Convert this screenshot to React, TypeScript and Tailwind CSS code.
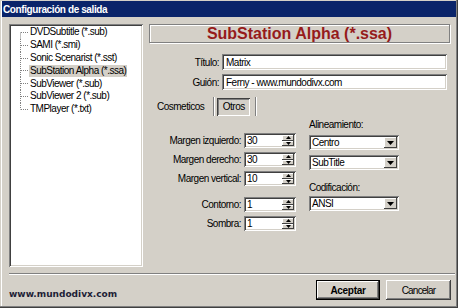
import React from "react";

const sunken =
  "shadow-[inset_1px_1px_0_#808080,inset_-1px_-1px_0_#ffffff,inset_2px_2px_0_#404040,inset_-2px_-2px_0_#d4d0c8]";
const raised =
  "shadow-[inset_-1px_-1px_0_#404040,inset_1px_1px_0_#ffffff,inset_-2px_-2px_0_#808080,inset_2px_2px_0_#d4d0c8]";
const raisedSmall = "shadow-[inset_-1px_-1px_0_#404040,inset_1px_1px_0_#ffffff]";

const items = [
  "DVDSubtitle (*.sub)",
  "SAMI (*.smi)",
  "Sonic Scenarist (*.sst)",
  "SubStation Alpha (*.ssa)",
  "SubViewer (*.sub)",
  "SubViewer 2 (*.sub)",
  "TMPlayer (*.txt)",
];

function Connector({ first, last }: { first: boolean; last: boolean }) {
  return (
    <svg width="9" height="13" className="shrink-0">
      <line
        x1="0.5"
        y1={first ? 6.5 : 0}
        x2="0.5"
        y2={last ? 6.5 : 13}
        stroke="#808080"
        strokeDasharray="1 1"
      />
      <line x1="1" y1="6.5" x2="8" y2="6.5" stroke="#808080" strokeDasharray="1 1" />
    </svg>
  );
}

function Spin({ value }: { value: string }) {
  return (
    <div className={`w-[52px] h-[15px] bg-white ${sunken} flex items-stretch p-[2px]`}>
      <span className="flex-1 leading-[11px] pl-[1px]">{value}</span>
      <div className="w-[12px] bg-[#d4d0c8] flex flex-col">
        <div className={`flex-1 flex items-center justify-center ${raisedSmall}`}>
          <svg width="5" height="3">
            <polygon points="2.5,0 5,3 0,3" fill="#000" />
          </svg>
        </div>
        <div className={`flex-1 flex items-center justify-center ${raisedSmall}`}>
          <svg width="5" height="3">
            <polygon points="0,0 5,0 2.5,3" fill="#000" />
          </svg>
        </div>
      </div>
    </div>
  );
}

function Select({ value }: { value: string }) {
  return (
    <div className={`w-[90px] h-[15px] bg-white ${sunken} flex items-stretch p-[2px]`}>
      <span className="flex-1 leading-[11px] pl-[1px]">{value}</span>
      <div className={`w-[13px] bg-[#d4d0c8] ${raisedSmall} flex items-center justify-center`}>
        <svg width="7" height="4">
          <polygon points="0,0 7,0 3.5,4" fill="#000" />
        </svg>
      </div>
    </div>
  );
}

function SpinRow({ label, value, className = "" }: { label: string; value: string; className?: string }) {
  return (
    <div className={`flex items-center h-[15px] ${className}`}>
      <span className="w-[93px] text-right pr-[1px]">{label}</span>
      <div className="ml-[2px]">
        <Spin value={value} />
      </div>
    </div>
  );
}

export default function App() {
  return (
    <div
      className={`w-[458px] h-[308px] bg-[#d4d0c8] flex flex-col pt-[1px] px-[2px] pb-[2px] font-['Liberation_Sans',Arial,sans-serif] text-[10px] tracking-[-0.5px] text-black shadow-[inset_-1px_-1px_0_#404040,inset_-2px_-2px_0_#808080,inset_1px_1px_0_#d4d0c8,inset_2px_2px_0_#ffffff] overflow-hidden`}
    >
      {/* Title bar */}
      <div className="h-[16px] bg-[#0a246a] text-white font-bold tracking-[-0.4px] flex items-center pl-[1px]">
        Configuración de salida
      </div>

      {/* Top section */}
      <div className="flex mt-[7px] ml-[7px] gap-[6px]">
        {/* Tree */}
        <div className={`w-[134px] h-[243px] bg-white ${sunken} pt-[2px] pl-[11px]`}>
          {items.map((t, i) => (
            <div key={t} className="flex items-center h-[12.8px]">
              <Connector first={i === 0} last={i === items.length - 1} />
              <span
                className={`leading-[12px] px-[1px] whitespace-nowrap ${
                  i === 3 ? "bg-[#d4d0c8]" : ""
                }`}
              >
                {t}
              </span>
            </div>
          ))}
        </div>

        {/* Right panel */}
        <div className="w-[301px] flex flex-col">
          <div className="h-[19px] border border-[#808080] shadow-[inset_1px_1px_0_#ffffff,1px_1px_0_#ffffff] flex items-center justify-center">
            <span className="font-bold text-[16px] tracking-normal leading-[17px] text-[#961b1b]">
              SubStation Alpha (*.ssa)
            </span>
          </div>

          <div className="flex items-center mt-[11px] h-[16px]">
            <span className="w-[70px] text-right">Título:</span>
            <div className={`ml-[3px] w-[225px] h-[16px] bg-white ${sunken} flex items-center pl-[4px]`}>
              Matrix
            </div>
          </div>
          <div className="flex items-center mt-[4px] h-[16px]">
            <span className="w-[70px] text-right">Guión:</span>
            <div className={`ml-[3px] w-[225px] h-[16px] bg-white ${sunken} flex items-center pl-[4px]`}>
              Ferny - www.mundodivx.com
            </div>
          </div>

          {/* Tabs */}
          <div className="flex items-center mt-[7px] h-[19px]">
            <span className="ml-[8px]">Cosmeticos</span>
            <div className="ml-[9px] w-[2px] h-[19px] border-l border-[#808080] border-r border-r-white" />
            <div className={`ml-[2px] w-[33px] h-[18px] flex items-center justify-center shadow-[inset_1px_1px_0_#404040,inset_-1px_-1px_0_#ffffff,inset_2px_2px_0_#808080]`}>
              Otros
            </div>
            <div className="ml-[5px] w-[2px] h-[19px] border-l border-[#808080] border-r border-r-white" />
          </div>

          {/* Lower form */}
          <div className="flex mt-[3px]">
            <div className="flex flex-col pt-[14px]">
              <SpinRow label="Margen izquierdo:" value="30" />
              <SpinRow label="Margen derecho:" value="30" className="mt-[4px]" />
              <SpinRow label="Margen vertical:" value="10" className="mt-[4px]" />
              <SpinRow label="Contorno:" value="1" className="mt-[11px]" />
              <SpinRow label="Sombra:" value="1" className="mt-[4px]" />
            </div>
            <div className="flex flex-col ml-[13px]">
              <span className="h-[12px] leading-[12px]">Alineamiento:</span>
              <div className="mt-[4px]">
                <Select value="Centro" />
              </div>
              <div className="mt-[5px]">
                <Select value="SubTitle" />
              </div>
              <span className="h-[12px] leading-[12px] mt-[12px]">Codificación:</span>
              <div className="mt-[2px]">
                <Select value="ANSI" />
              </div>
            </div>
          </div>
        </div>
      </div>

      {/* Separator */}
      <div className="mt-[6px] ml-[7px] mr-[1px] h-[2px] border-t border-[#808080] border-b border-b-white" />

      {/* Bottom row */}
      <div className="flex items-start justify-between pl-[7px] pr-[5px] mt-[5px]">
        <span className="pt-[8px] leading-[12px] font-['DejaVu_Sans',Verdana,sans-serif] font-bold text-[9px] tracking-normal text-[#1e1e36]">
          www.mundodivx.com
        </span>
        <div className="flex gap-[6px]">
          <div className="w-[64px] h-[20px] border border-black">
            <div className={`w-full h-full ${raised} flex items-center justify-center font-bold tracking-[-0.3px]`}>
              Aceptar
            </div>
          </div>
          <div className={`w-[65px] h-[20px] ${raised} flex items-center justify-center tracking-[-0.8px]`}>
            Cancelar
          </div>
        </div>
      </div>
    </div>
  );
}
